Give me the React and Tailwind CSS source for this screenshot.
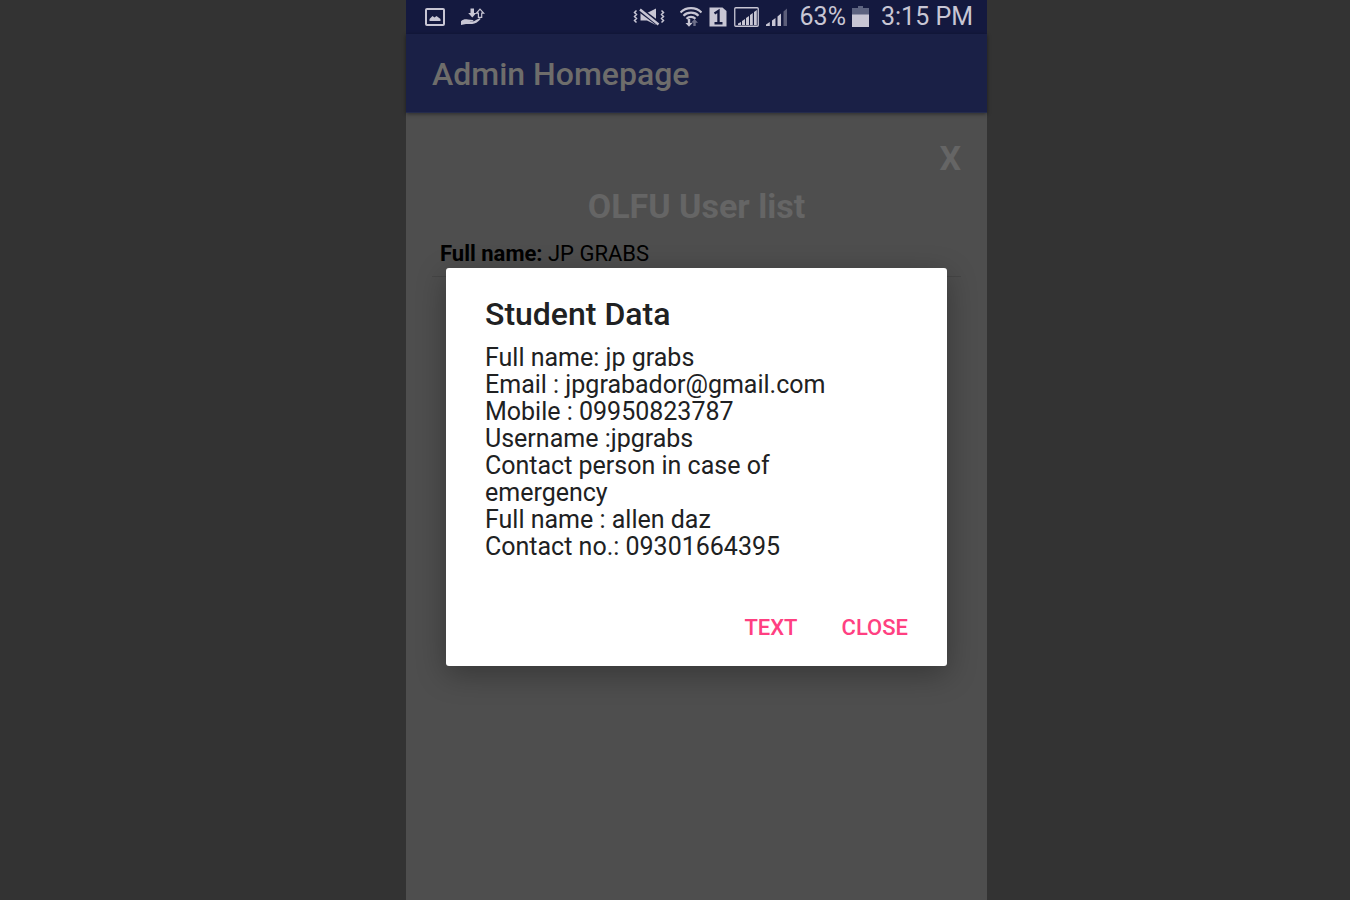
import React from "react";

const student = [
  "Full name: jp grabs",
  "Email : jpgrabador@gmail.com",
  "Mobile : 09950823787",
  "Username :jpgrabs",
  "Contact person in case of emergency",
  "Full name : allen daz",
  "Contact no.: 09301664395",
];

function PictureIcon() {
  return (
    <svg width="20" height="18" viewBox="0 0 20 18" aria-hidden="true">
      <rect x="1" y="1" width="18" height="16" rx="1" fill="none" stroke="currentColor" strokeWidth="2" />
      <path d="M4.500 13v-2l3-3 2 1.500L11.500 8l2 1.500 2 1.500v2z" fill="currentColor" />
    </svg>
  );
}

function TransferIcon() {
  return (
    <svg width="24" height="18" viewBox="0 0 24 18" fill="currentColor" aria-hidden="true">
      <path d="M9.500 0.500h3.500v4.500h2.300L11.300 9.500 7.200 5h2.300z" />
      <path d="M19 1.200l3.700 4h-2v4.200h-3.300V5.200h-2z" fill="none" stroke="currentColor" strokeWidth="1.200" />
      <path d="M0 13.200c2-1.700 4.500-2.300 7-1.600l4.500.4c1.300.1 1.300 1.100 0 1.300H8.500c2.500.5 4.500 0 6.500-1.400l3-1.500c1.200-.4 2 .3 1.200 1.200-2.500 2.600-5 4.400-8 4.400H5L0 17z" />
    </svg>
  );
}

function MuteIcon() {
  return (
    <svg width="32" height="18" viewBox="0 0 32 18" aria-hidden="true">
      <path d="M7.500 5h6.500L23 0.500v16.500l-9-4.500H7.500z" fill="currentColor" />
      <path d="M6.500 1.500l20 15" stroke="#14193f" strokeWidth="5" />
      <path d="M7 1.500l18.500 15" stroke="currentColor" strokeWidth="2.400" />
      <path d="M3.500 2.500L1.500 4.500l2 2-2 2 2 2-2 2 2 2M28.500 2.500l2 2-2 2 2 2-2 2 2 2-2 2" fill="none" stroke="currentColor" strokeWidth="1.500" />
    </svg>
  );
}

function WifiIcon() {
  return (
    <svg width="22" height="20" viewBox="0 0 22 20" aria-hidden="true">
      <g fill="none" stroke="currentColor" strokeWidth="2.200">
        <path d="M0.500 5.500C6-0.300 16-0.300 21.500 5.500" />
        <path d="M3.500 8.700c4-4 11-4 15 0" />
        <path d="M6.500 11.700c2.500-2.500 6.500-2.500 9 0" />
      </g>
      <path d="M7.800 12h2.400v4h2.300L9 19.800 5.500 16h2.300z" fill="currentColor" />
      <path d="M14.500 12l3.500 3.800h-2.300V19h-2.400v-3.200h-2.300z" fill="currentColor" opacity=".5" />
    </svg>
  );
}

function SimIcon() {
  return (
    <svg width="18" height="20" viewBox="0 0 18 20" aria-hidden="true">
      <path d="M0.500 0.500h13L17.500 4v15.500h-17z" fill="currentColor" />
      <path d="M5.500 6.500L9.500 4V16M5.500 16.200h8" fill="none" stroke="#14193f" strokeWidth="2.400" />
    </svg>
  );
}

function FramedSignalIcon() {
  return (
    <svg width="25" height="20" viewBox="0 0 25 20" aria-hidden="true">
      <rect x="0.750" y="0.750" width="23.500" height="18.500" rx="1" fill="none" stroke="currentColor" strokeWidth="1.300" />
      <path d="M4 18v-1.500L7 15v3zM8 18v-4l3-2v6zM12 18v-7l3-2v9zM16 18V8l2.800-2V18zM20 18V5L22.800 3v15z" fill="currentColor" />
    </svg>
  );
}

function SignalIcon() {
  return (
    <svg width="22" height="20" viewBox="0 0 22 20" fill="currentColor" aria-hidden="true">
      <path d="M0 19v-1.500L3.800 15v4zM6 19v-5.500L9.500 11v8zM11.500 19V9.500L15 6.500V19z" />
      <path d="M17.500 19V4.500L21 1.500V19z" opacity=".4" />
    </svg>
  );
}

function BatteryIcon() {
  return (
    <svg width="17" height="22" viewBox="0 0 17 22" aria-hidden="true">
      <path d="M0 2h6V0h5v2h6v7H0z" fill="#5d6380" />
      <path d="M0 8.500h17V21H0z" fill="currentColor" />
    </svg>
  );
}

function StatusBar() {
  return (
    <div className="flex h-[34px] items-center justify-between bg-[#14193f] pr-3.5 pl-[19px] text-[#c8c6d4]">
      <div className="flex items-center gap-4">
        <PictureIcon />
        <TransferIcon />
      </div>
      <div className="flex items-center">
        <div className="mr-3 flex items-center gap-[7px]">
          <span className="mr-2"><MuteIcon /></span>
          <WifiIcon />
          <SimIcon />
          <FramedSignalIcon />
          <SignalIcon />
        </div>
        <span className="mr-1.5 text-[25px] leading-[34px]">63%</span>
        <BatteryIcon />
        <time className="ml-3 text-[25px] leading-[34px]">3:15 PM</time>
      </div>
    </div>
  );
}

export default function App() {
  return (
    <div className="grid min-h-screen grid-cols-[406fr_581fr_363fr] bg-[#333333] font-[Roboto,sans-serif]">
      <div className="relative col-start-2 flex flex-col bg-[#4e4e4e]">
        <StatusBar />
        <header className="flex h-[79px] items-center border-b border-[#252c4c] bg-[#1a2046] px-[26px] pt-0.5 shadow-[0_1px_4px_rgba(0,0,0,0.45)]">
          <h1 className="text-[32px] leading-10 font-medium text-[#6e6d6b]">Admin Homepage</h1>
        </header>
        <main className="flex flex-col px-[26px] pt-[25px]">
          <button type="button" className="self-end text-[34px] leading-10 font-bold text-[#656565]">X</button>
          <h2 className="mt-2 text-center text-[34px] leading-10 font-bold text-[#656565]">OLFU User list</h2>
          <ul className="mt-4">
            <li className="border-b border-[#454545] px-2 pb-2.5 text-[22px] leading-6 text-black">
              <b>Full name:</b> JP GRABS
            </li>
          </ul>
        </main>

        <div className="absolute inset-x-0 top-[34px] bottom-0 flex items-center justify-center px-10">
          <section
            role="dialog"
            aria-labelledby="dialog-title"
            className="w-full rounded-[3px] bg-white px-[39px] pt-[30px] pb-[22px] text-[#202122] shadow-[0_8px_30px_rgba(0,0,0,0.3)]"
          >
            <h2 id="dialog-title" className="text-[32px] leading-8 font-medium">Student Data</h2>
            <div className="mt-3.5 pr-16 text-[25px] leading-[27px]">
              {student.map((line) => (
                <p key={line}>{line}</p>
              ))}
            </div>
            <div className="mt-[52px] flex justify-end gap-11 text-[22px] leading-8 font-medium text-[#ff4081]">
              <button type="button">TEXT</button>
              <button type="button">CLOSE</button>
            </div>
          </section>
        </div>
      </div>
    </div>
  );
}
